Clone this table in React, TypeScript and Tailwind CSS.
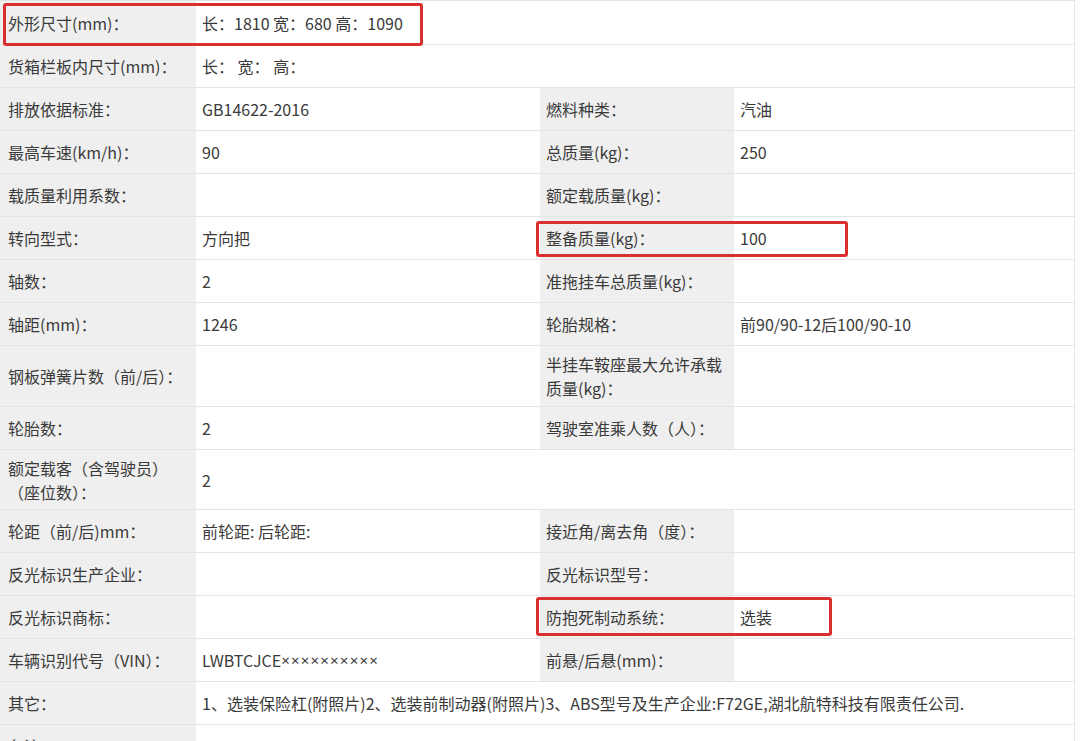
import React from "react";

type Row = {
  label: React.ReactNode;
  value?: React.ReactNode;
  label2?: React.ReactNode;
  value2?: React.ReactNode;
  span?: boolean;
  h: string;
};

const ROWS: Row[] = [
  { label: "外形尺寸(mm)：", value: "长：1810 宽：680 高：1090", span: true, h: "h-[44px]" },
  { label: "货箱栏板内尺寸(mm)：", value: "长：  宽：  高：", span: true, h: "h-[43px]" },
  { label: "排放依据标准：", value: "GB14622-2016", label2: "燃料种类：", value2: "汽油", h: "h-[43px]" },
  { label: "最高车速(km/h)：", value: "90", label2: "总质量(kg)：", value2: "250", h: "h-[43px]" },
  { label: "载质量利用系数：", value: "", label2: "额定载质量(kg)：", value2: "", h: "h-[43px]" },
  { label: "转向型式：", value: "方向把", label2: "整备质量(kg)：", value2: "100", h: "h-[43px]" },
  { label: "轴数：", value: "2", label2: "准拖挂车总质量(kg)：", value2: "", h: "h-[43px]" },
  { label: "轴距(mm)：", value: "1246", label2: "轮胎规格：", value2: "前90/90-12后100/90-10", h: "h-[43px]" },
  {
    label: "钢板弹簧片数（前/后）：",
    value: "",
    label2: (
      <>
        半挂车鞍座最大允许承载
        <br />
        质量(kg)：
      </>
    ),
    value2: "",
    h: "h-[61px]",
  },
  { label: "轮胎数：", value: "2", label2: "驾驶室准乘人数（人）：", value2: "", h: "h-[43px]" },
  {
    label: (
      <>
        额定载客（含驾驶员）
        <br />
        （座位数）：
      </>
    ),
    value: "2",
    span: true,
    h: "h-[60px]",
  },
  { label: "轮距（前/后)mm：", value: "前轮距: 后轮距:", label2: "接近角/离去角（度）：", value2: "", h: "h-[43px]" },
  { label: "反光标识生产企业：", value: "", label2: "反光标识型号：", value2: "", h: "h-[43px]" },
  { label: "反光标识商标：", value: "", label2: "防抱死制动系统：", value2: "选装", h: "h-[43px]" },
  {
    label: "车辆识别代号（VIN）：",
    value: (
      <>
        LWBTCJCE
        <span className="font-['Noto_Sans',sans-serif] text-[15px] tracking-[1.2px]">××××××××××</span>
      </>
    ),
    label2: "前悬/后悬(mm)：",
    value2: "",
    h: "h-[43px]",
  },
  {
    label: "其它：",
    value: "1、选装保险杠(附照片)2、选装前制动器(附照片)3、ABS型号及生产企业:F72GE,湖北航特科技有限责任公司.",
    span: true,
    h: "h-[43px]",
  },
  { label: "备注：", value: "", span: true, h: "h-[43px]" },
];

function SpecRow({ row }: { row: Row }) {
  return (
    <div className={`flex border-b border-[#e4e4e4] ${row.h}`}>
      <div className="w-[196px] shrink-0 bg-[#efefef] pl-2 flex items-center leading-6">
        {row.label}
      </div>
      {row.span ? (
        <div className="flex-1 pl-[6px] flex items-center">{row.value}</div>
      ) : (
        <>
          <div className="w-[344px] shrink-0 pl-[6px] flex items-center">
            {row.value}
          </div>
          <div className="w-[194px] shrink-0 bg-[#efefef] pl-[6px] flex items-center leading-6">
            {row.label2}
          </div>
          <div className="flex-1 pl-[6px] flex items-center">{row.value2}</div>
        </>
      )}
    </div>
  );
}

export default function App() {
  return (
    <div className="relative w-[1080px] h-[741px] overflow-hidden bg-white text-[16px] text-[#3a3a3a] font-['Noto_Sans_CJK_SC','Noto_Sans',sans-serif]">
      <div className="w-[1075px] border-t border-r border-[#e4e4e4]">
        {ROWS.map((r, i) => (
          <SpecRow key={i} row={r} />
        ))}
      </div>

      {/* red annotation frames */}
      <div className="absolute left-[3px] top-[3px] w-[420px] h-[43px] border-[3px] border-[#d9302f] rounded-[3px]" />
      <div className="absolute left-[536px] top-[221px] w-[312px] h-[36px] border-[3px] border-[#d9302f] rounded-[3px]" />
      <div className="absolute left-[536px] top-[597px] w-[296px] h-[39px] border-[3px] border-[#d9302f] rounded-[3px]" />
    </div>
  );
}
